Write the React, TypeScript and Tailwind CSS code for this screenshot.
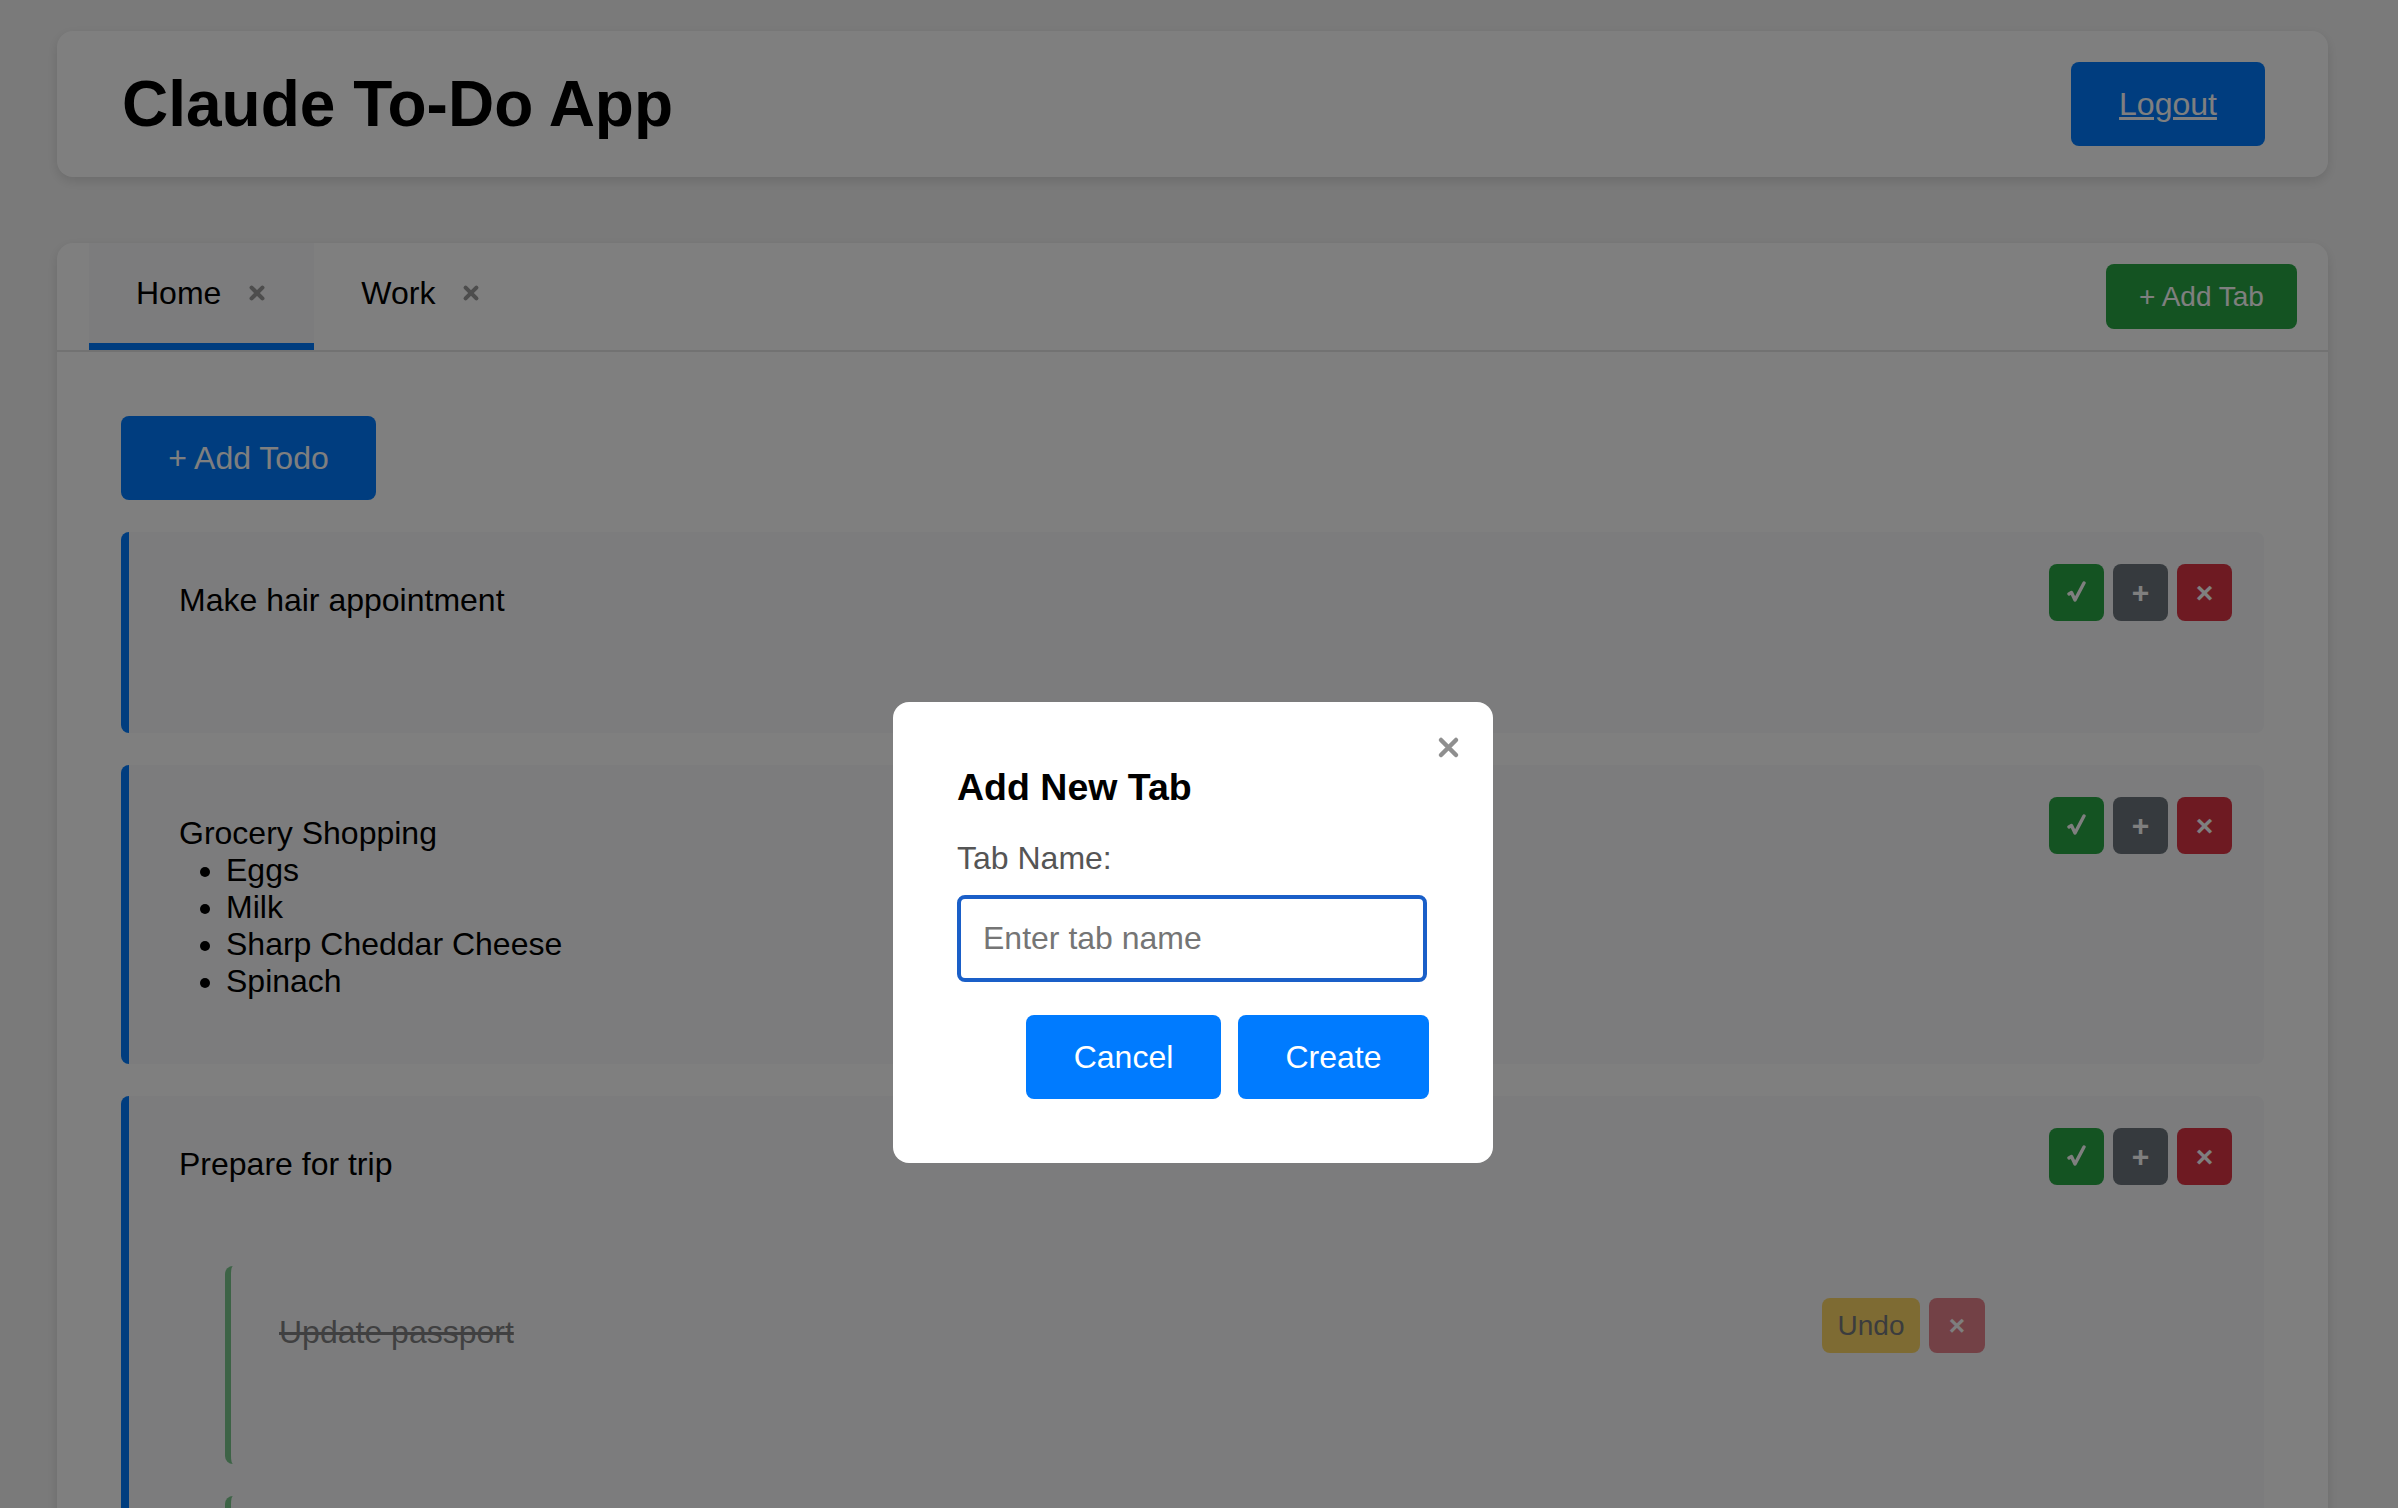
import React from "react";

type Sub = { id: number; text: string };
type Todo = { id: number; title: string; items?: string[]; subs?: Sub[]; minH: string };

const todos: Todo[] = [
  { id: 1, title: "Make hair appointment", minH: "min-h-[201px]" },
  {
    id: 2,
    title: "Grocery Shopping",
    items: ["Eggs", "Milk", "Sharp Cheddar Cheese", "Spinach"],
    minH: "min-h-[299px]",
  },
  {
    id: 3,
    title: "Prepare for trip",
    subs: [{ id: 31, text: "Update passport" }],
    minH: "min-h-[201px]",
  },
];

function XIcon({ size, color, stroke }: { size: number; color: string; stroke: number }) {
  return (
    <svg width={size} height={size} viewBox="0 0 20 20" fill="none">
      <path d="M4 4 L16 16 M16 4 L4 16" stroke={color} strokeWidth={stroke} strokeLinecap="round" />
    </svg>
  );
}

function CheckIcon() {
  return (
    <svg width="22" height="24" viewBox="0 0 22 24" fill="none">
      <path d="M3 13 L5.5 11.5 L9 19 L18 2" stroke="white" strokeWidth="3.4" strokeLinejoin="round" strokeLinecap="round" />
    </svg>
  );
}

function SubTodo({ sub }: { sub: Sub }) {
  return (
    <div className="flex min-h-[198px] items-start gap-[32px] rounded-[8px] border-l-[6px] border-[#28a745] bg-[#f8f9fa] p-[32px] opacity-60">
      <div className="min-w-0 flex-1 p-[16px] text-[32px] leading-[37px] text-[#333] line-through">{sub.text}</div>
      <div className="flex gap-[9px]">
        <button className="h-[55px] w-[98px] rounded-[8px] bg-[#ffc107] text-[28px] text-[#212529]">Undo</button>
        <button className="h-[55px] w-[56px] rounded-[8px] bg-[#dc3545] text-[28px] font-bold text-white">×</button>
      </div>
    </div>
  );
}

function TodoCard({ todo }: { todo: Todo }) {
  return (
    <div className={`flex items-start gap-[32px] rounded-[8px] border-l-[8px] border-[#007bff] bg-[#f8f9fa] p-[32px] ${todo.minH}`}>
      <div className="min-w-0 flex-1">
        <div className="p-[18px] text-[32px] leading-[37px]">
          <div>{todo.title}</div>
          {todo.items && (
            <ul className="list-disc pl-[47px]">
              {todo.items.map((it) => (
                <li key={it}>{it}</li>
              ))}
            </ul>
          )}
        </div>
        {todo.subs && (
          <div className="ml-[64px] mt-[65px] flex flex-col gap-[32px]">
            {todo.subs.map((s) => (
              <SubTodo key={s.id} sub={s} />
            ))}
            {/* next sub-task, only its top edge is in view */}
            <div className="h-[198px] rounded-[8px] border-l-[6px] border-[#28a745] bg-[#f8f9fa] opacity-60" />
          </div>
        )}
      </div>
      <div className="flex gap-[9px]">
        <button className="flex h-[57px] w-[55px] items-center justify-center rounded-[8px] bg-[#28a745]">
          <CheckIcon />
        </button>
        <button className="h-[57px] w-[55px] rounded-[8px] bg-[#6c757d] text-[30px] font-bold text-white">+</button>
        <button className="h-[57px] w-[55px] rounded-[8px] bg-[#dc3545] text-[30px] font-bold text-white">×</button>
      </div>
    </div>
  );
}

function Tab({ label, active }: { label: string; active?: boolean }) {
  return (
    <div
      className={`flex items-center gap-[27px] pl-[47px] pr-[48px] text-[32px] ${
        active ? "border-b-[7px] border-[#007bff] bg-[#f8f9fa]" : "border-b-[7px] border-transparent"
      }`}
    >
      <span>{label}</span>
      <XIcon size={18} color="#9a9a9a" stroke={4.6} />
    </div>
  );
}

export default function App() {
  return (
    <div className="relative h-[1508px] overflow-hidden bg-[#f5f5f5] font-['Liberation_Sans',Arial,Helvetica,sans-serif] text-black">
      <div className="ml-[57px] w-[2271px] pt-[31px]">
        <header className="flex items-center justify-between rounded-[16px] bg-white py-[31px] pl-[65px] pr-[63px] shadow-[0_4px_12px_rgba(0,0,0,0.12)]">
          <h1 className="text-[64px] font-bold leading-[74px]">Claude To-Do App</h1>
          <button className="h-[84px] w-[194px] rounded-[8px] bg-[#007bff] text-[32px] text-white underline">Logout</button>
        </header>

        <section className="mt-[66px] rounded-[16px] bg-white shadow-[0_4px_12px_rgba(0,0,0,0.12)]">
          <div className="flex h-[109px] items-stretch justify-between border-b-2 border-[#e5e5e5] pl-[32px] pr-[31px]">
            <div className="flex items-stretch">
              <Tab label="Home" active />
              <Tab label="Work" />
            </div>
            <button className="self-center h-[65px] w-[191px] rounded-[8px] bg-[#28a745] text-[28px] text-white">+ Add Tab</button>
          </div>

          <div className="px-[64px] pt-[64px] pb-[64px]">
            <button className="h-[84px] w-[255px] rounded-[8px] bg-[#007bff] text-[32px] text-white">+ Add Todo</button>
            <div className="mt-[32px] flex flex-col gap-[32px]">
              {todos.map((t) => (
                <TodoCard key={t.id} todo={t} />
              ))}
            </div>
          </div>
        </section>
      </div>

      <div className="fixed inset-0 bg-black/50">
        <div className="relative ml-[893px] mt-[702px] w-[600px] rounded-[16px] bg-white p-[64px]">
          <button className="absolute right-[32px] top-[33px]">
            <XIcon size={25} color="#8f8f8f" stroke={3.6} />
          </button>
          <h3 className="text-[37.5px] font-bold leading-[43px]">Add New Tab</h3>
          <label className="mt-[31px] block text-[32px] leading-[37px] text-[#555]">Tab Name:</label>
          <input
            placeholder="Enter tab name"
            className="mt-[18px] h-[87px] w-[470px] rounded-[8px] border-[4px] border-[#1a5fc8] px-[22px] text-[32px] outline-none placeholder:text-[#757575]"
          />
          <div className="mt-[33px] flex justify-end gap-[17px]">
            <button className="h-[84px] w-[195px] rounded-[8px] bg-[#007bff] text-[32px] text-white">Cancel</button>
            <button className="h-[84px] w-[191px] rounded-[8px] bg-[#007bff] text-[32px] text-white">Create</button>
          </div>
        </div>
      </div>
    </div>
  );
}
